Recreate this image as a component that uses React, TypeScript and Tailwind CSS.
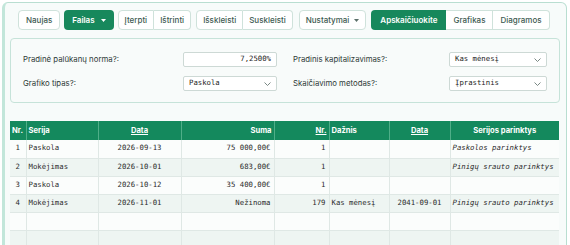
import React from 'react'

const sans = "font-['Inter','Noto_Sans',sans-serif]"
const mono = "font-['DejaVu_Sans_Mono','Liberation_Mono',monospace]"

interface Row {
  nr: string
  serija: string
  data: string
  suma: string
  kiekis: string
  daznis: string
  data2: string
  parinktys: string
}

const rows: Row[] = [
  { nr: '1', serija: 'Paskola', data: '2026-09-13', suma: '75 000,00€', kiekis: '1', daznis: '', data2: '', parinktys: 'Paskolos parinktys' },
  { nr: '2', serija: 'Mokėjimas', data: '2026-10-01', suma: '683,00€', kiekis: '1', daznis: '', data2: '', parinktys: 'Pinigų srauto parinktys' },
  { nr: '3', serija: 'Paskola', data: '2026-10-12', suma: '35 400,00€', kiekis: '1', daznis: '', data2: '', parinktys: '' },
  { nr: '4', serija: 'Mokėjimas', data: '2026-11-01', suma: 'Nežinoma', kiekis: '179', daznis: 'Kas mėnesį', data2: '2041-09-01', parinktys: 'Pinigų srauto parinktys' },
  { nr: '', serija: '', data: '', suma: '', kiekis: '', daznis: '', data2: '', parinktys: '' },
  { nr: '', serija: '', data: '', suma: '', kiekis: '', daznis: '', data2: '', parinktys: '' },
]

function Caret({ light }: { light?: boolean }) {
  return (
    <svg width="5" height="3" viewBox="0 0 5 3" className={light ? 'fill-white' : 'fill-[#5b6f69]'}>
      <path d="M0 0h5L2.5 3z" />
    </svg>
  )
}

function Chevron() {
  return (
    <svg width="7" height="4" viewBox="0 0 7 4" fill="none" stroke="#6b7a76" strokeWidth="0.9">
      <path d="M0.5 0.5l3 3 3-3" />
    </svg>
  )
}

function Btn({ children, first, last, single, px = 'px-[6px]' }: { children: React.ReactNode; first?: boolean; last?: boolean; single?: boolean; px?: string }) {
  const round = single ? 'rounded-[4px] border' : `${first ? 'rounded-l-[4px] border' : 'border-y border-r'} ${last ? 'rounded-r-[4px]' : ''}`
  return (
    <button className={`h-[20px] ${px} flex items-center gap-[5px] bg-white border-[#cfe2db] text-[8px] font-medium text-[#3d5a51] ${round}`}>
      {children}
    </button>
  )
}

function Field({ label, value, select, width }: { label: string; value: string; select?: boolean; width: string }) {
  return (
    <div className="flex items-center justify-between">
      <span className="text-[7.8px] text-[#2e3a37]">{label}</span>
      <div className={`${width} h-[15px] bg-white border border-[#cdd9d5] rounded-[2px] flex items-center px-[5px] ${select ? 'justify-between' : 'justify-end'}`}>
        <span className={`${mono} text-[7.3px] text-[#222]`}>{value}</span>
        {select && <Chevron />}
      </div>
    </div>
  )
}

export default function App() {
  return (
    <div className={`${sans} bg-white w-[570px] h-[245px] overflow-hidden p-[2px]`}>
      <div className="h-[260px] w-[565px] border border-[#b9ded1] border-l-[3px] border-l-[#c2e6da] rounded-[6px] bg-[#f7fbfa] pt-[7px] pl-[5px] pr-[5px]">
        {/* Toolbar */}
        <div className="flex items-center pl-[8px]">
          <Btn single px="px-[7px]">Naujas</Btn>
          <button className="ml-[4px] h-[20px] px-[8px] flex items-center gap-[6px] rounded-[4px] bg-[#17885c] text-white text-[8px] font-semibold">
            Failas <Caret light />
          </button>
          <div className="ml-[4px] flex">
            <Btn first>Įterpti</Btn>
            <Btn last>Ištrinti</Btn>
          </div>
          <div className="ml-[5px] flex">
            <Btn first>Išskleisti</Btn>
            <Btn last>Suskleisti</Btn>
          </div>
          <div className="ml-[6px]">
            <Btn single>
              Nustatymai <Caret />
            </Btn>
          </div>
          <div className="ml-[5px] flex">
            <button className="h-[20px] px-[9px] rounded-l-[4px] bg-[#17885c] text-white text-[8px] font-semibold">Apskaičiuokite</button>
            <Btn px="px-[7px]">Grafikas</Btn>
            <Btn last px="px-[7px]">Diagramos</Btn>
          </div>
        </div>

        {/* Settings panel */}
        <div className="mt-[8px] h-[65px] w-[550px] border border-[#c6e3d9] rounded-[4px] bg-[#f8fbfa] px-[12px] pt-[13px] grid grid-cols-2 gap-x-[16px] gap-y-[9px] content-start">
          <Field label="Pradinė palūkanų norma?:" value="7,2500%" width="w-[94px]" />
          <Field label="Pradinis kapitalizavimas?:" value="Kas mėnesį" select width="w-[98px]" />
          <Field label="Grafiko tipas?:" value="Paskola" select width="w-[94px]" />
          <Field label="Skaičiavimo metodas?:" value="Įprastinis" select width="w-[98px]" />
        </div>

        {/* Table */}
        <table className="mt-[18px] w-[549px] table-fixed border-collapse">
          <colgroup>
            <col className="w-[16px]" />
            <col className="w-[72px]" />
            <col className="w-[83px]" />
            <col className="w-[93px]" />
            <col className="w-[55px]" />
            <col className="w-[60px]" />
            <col className="w-[61px]" />
            <col className="w-[109px]" />
          </colgroup>
          <thead>
            <tr className="h-[19px] bg-[#14895d] text-white text-[7.6px] font-semibold">
              <th className="border-r border-[#4fae88] px-[2px] text-left">Nr.</th>
              <th className="border-r border-[#4fae88] px-[2px] text-left">Serija</th>
              <th className="border-r border-[#4fae88] px-[2px] text-center underline">Data</th>
              <th className="border-r border-[#4fae88] px-[2px] text-right">Suma</th>
              <th className="border-r border-[#4fae88] px-[2px] text-right underline">Nr.</th>
              <th className="border-r border-[#4fae88] px-[2px] text-left">Dažnis</th>
              <th className="border-r border-[#4fae88] px-[2px] text-center underline">Data</th>
              <th className="px-[2px] text-center">Serijos parinktys</th>
            </tr>
          </thead>
          <tbody className={`${mono} text-[7.3px] text-[#2a2a2a]`}>
            {rows.map((r, i) => (
              <tr key={i} className={`h-[18px] border-b border-[#dfe8e5] ${i % 2 === 0 ? 'bg-[#fbfdfc]' : 'bg-[#eef5f2]'}`}>
                <td className="border-r border-[#dfe8e5] text-center">{r.nr}</td>
                <td className="border-r border-[#dfe8e5] px-[2px]">{r.serija}</td>
                <td className="border-r border-[#dfe8e5] text-center">{r.data}</td>
                <td className="border-r border-[#dfe8e5] px-[3px] text-right">{r.suma}</td>
                <td className="border-r border-[#dfe8e5] px-[3px] text-right">{r.kiekis}</td>
                <td className="border-r border-[#dfe8e5] px-[2px]">{r.daznis}</td>
                <td className="border-r border-[#dfe8e5] text-center">{r.data2}</td>
                <td className="px-[2px] italic">{r.parinktys}</td>
              </tr>
            ))}
          </tbody>
        </table>
      </div>
    </div>
  )
}
